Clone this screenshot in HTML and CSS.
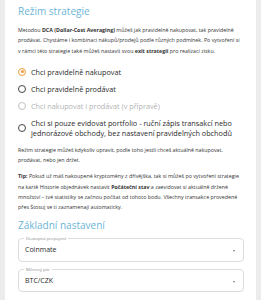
FILE: index.html
```html
<!DOCTYPE html>
<html lang="cs">
<head>
<meta charset="utf-8">
<link rel="stylesheet" href="styles.css">
</head>
<body>
<div class="card">
  <h2 class="title">Režim strategie</h2>
  <p class="text">Metodou <b>DCA (Dollar-Cost Averaging)</b> můžeš jak pravidelně nakupovat, tak pravidelně prodávat. Chystáme i kombinaci nákupů/prodejů podle různých podmínek. Po vytvoření si v rámci této strategie také můžeš nastavit svou <b>exit strategii</b> pro realizaci zisku.</p>
  <div class="options">
    <label class="opt"><span class="radio checked"></span><span>Chci pravidelně nakupovat</span></label>
    <label class="opt"><span class="radio"></span><span>Chci pravidelně prodávat</span></label>
    <label class="opt disabled"><span class="radio"></span><span>Chci nakupovat i prodávat (v přípravě)</span></label>
    <label class="opt"><span class="radio"></span><span>Chci si pouze evidovat portfolio - ruční zápis transakcí nebo jednorázové obchody, bez nastavení pravidelných obchodů</span></label>
  </div>
  <p class="text after">Režim strategie můžeš kdykoliv upravit, podle toho jestli chceš aktuálně nakupovat, prodávat, nebo jen držet.</p>
  <p class="text tip"><b>Tip:</b> Pokud už máš nakoupené kryptoměny z dřívějška, tak si můžeš po vytvoření strategie na kartě Historie objednávek nastavit <b>Počáteční stav</b> a zaevidovat si aktuálně držené množství – tvé statistiky se začnou počítat od tohoto bodu. Všechny transakce provedené přes Štosuj se ti zaznamenají automaticky.</p>
  <h2 class="title second">Základní nastavení</h2>
  <div class="field">
    <span class="legend">Dostupná propojení</span>
    <span class="value">Coinmate</span>
    <span class="arrow"></span>
  </div>
  <div class="field">
    <span class="legend">Měnový pár</span>
    <span class="value">BTC/CZK</span>
    <span class="arrow"></span>
  </div>
</div>
</body>
</html>
```
FILE: styles.css
```css
html, body { margin: 0; padding: 0; }
body {
  background: #ececec;
  font-family: "Open Sans", "DejaVu Sans", sans-serif;
  color: #2b2b2b;
  height: 300px;
  overflow: hidden;
}
.card {
  background: #fff;
  margin: 0 5px;
  padding: 5px 13px 10px 13px;
  min-height: 300px;
  box-sizing: border-box;
}
.title {
  margin: 0;
  font-weight: 400;
  font-size: 10px;
  line-height: 12px;
  color: #6cb5d6;
}
.title.second { margin-top: 6px; }
.text {
  margin: 8px 0 0 0;
  font-size: 5.3px;
  line-height: 10.3px;
  color: #333;
}
.text.after { margin-top: 0; }
.text.tip { margin-top: 6px; }
.text b { font-weight: 700; }
.options {
  display: flex;
  flex-direction: column;
  gap: 7px;
  margin: 11px 0 7px 0;
}
.opt {
  display: flex;
  align-items: center;
  gap: 5px;
  font-size: 7.3px;
  line-height: 10px;
  color: #2b2b2b;
}
.opt.disabled { color: #b3b3b3; }
.radio {
  flex: none;
  width: 8px;
  height: 8px;
  border: 1px solid #444;
  border-radius: 50%;
  box-sizing: border-box;
  position: relative;
}
.opt.disabled .radio { border-color: #c2c2c2; }
.radio.checked { border-color: #f39c3c; }
.radio.checked::after {
  content: "";
  position: absolute;
  left: 1.5px; top: 1.5px;
  width: 3px; height: 3px;
  border-radius: 50%;
  background: #f39c3c;
}
.field {
  position: relative;
  margin-top: 7px;
  height: 24px;
  border: 1px solid #dcdcdc;
  border-radius: 4px;
  width: 226px;
  box-sizing: border-box;
  display: flex;
  align-items: center;
  padding: 0 6px;
}
.field + .field { margin-top: 7px; height: 23px; }
.legend {
  position: absolute;
  left: 5px;
  top: -3px;
  background: #fff;
  padding: 0 2px;
  font-size: 4.3px;
  line-height: 5px;
  color: #8a8a8a;
}
.value { font-size: 7px; color: #2b2b2b; }
.arrow {
  position: absolute;
  right: 8px;
  top: 11px;
  width: 0; height: 0;
  border-left: 1.6px solid transparent;
  border-right: 1.6px solid transparent;
  border-top: 2px solid #777;
}
```
